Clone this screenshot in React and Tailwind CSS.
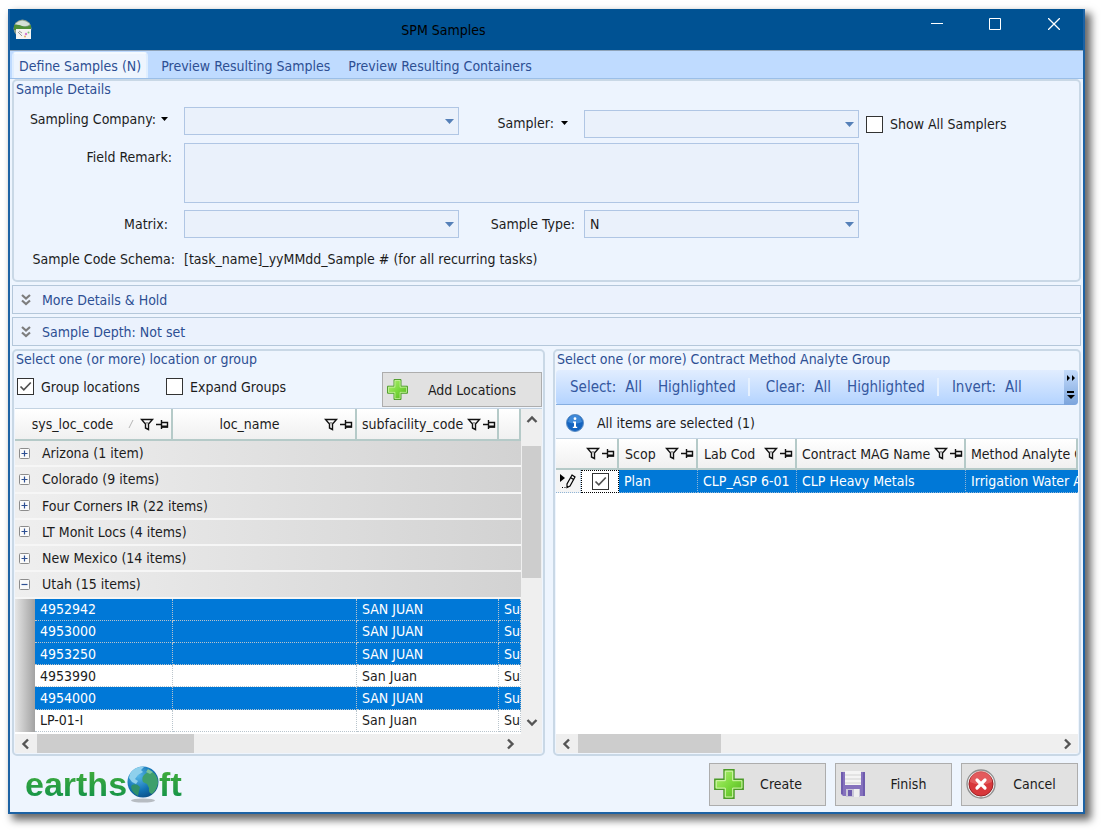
import { useState } from "react";

const groups = [
    { name: "Arizona (1 item)" },
    { name: "Colorado (9 items)" },
    { name: "Four Corners IR (22 items)" },
    { name: "LT Monit Locs (4 items)" },
    { name: "New Mexico (14 items)" },
    { name: "Utah (15 items)", open: true },
];

const locations = [
    { code: "4952942", facility: "SAN JUAN", selected: true },
    { code: "4953000", facility: "SAN JUAN", selected: true },
    { code: "4953250", facility: "SAN JUAN", selected: true },
    { code: "4953990", facility: "San Juan", selected: false },
    { code: "4954000", facility: "SAN JUAN", selected: true },
    { code: "LP-01-I", facility: "San Juan", selected: false },
];

function Caret({ className }) {
    return (
        <svg className={className} width="9" height="5" viewBox="0 0 9 5" fill="currentColor" aria-hidden="true">
            <path d="M0 0h9L4.5 5z" />
        </svg>
    );
}

function Combo({ id, className = "", options = [""] }) {
    return (
        <div className={"grid h-7 items-center " + className}>
            <select id={id} className="col-start-1 row-start-1 h-full w-full appearance-none border border-[#b0c6e4] bg-[#eaf1fb] px-[5px] outline-none">
                {options.map((o) => <option key={o}>{o}</option>)}
            </select>
            <Caret className="pointer-events-none col-start-1 row-start-1 mr-[5px] justify-self-end text-[#5580b8]" />
        </div>
    );
}

function Check({ label, defaultChecked, className = "", hideLabel }) {
    return (
        <label className={"flex items-center gap-[7px] " + className}>
            <span className="grid">
                <input type="checkbox" defaultChecked={defaultChecked} aria-label={label} className="peer col-start-1 row-start-1 size-[17px] appearance-none border border-[#333] bg-white" />
                <svg className="pointer-events-none invisible col-start-1 row-start-1 peer-checked:visible" width="17" height="17" viewBox="0 0 17 17" fill="none" stroke="#505050" strokeWidth="1.7" aria-hidden="true">
                    <path d="M3.5 8.5l3.3 3.3 7-7.3" />
                </svg>
            </span>
            {!hideLabel && <span>{label}</span>}
        </label>
    );
}

function FilterPin() {
    return (
        <svg width="30" height="13" viewBox="0 0 30 13" fill="none" stroke="#111" aria-hidden="true" className="shrink-0">
            <path d="M1.5 1.5h11L8.5 6v5.5l-3-1.5V6z" strokeWidth="1.4" fill="#fff" />
            <path d="M5 4h4L7 6.5z" fill="#999" stroke="none" />
            <path d="M16 6.5h5M21.5 2v9M22 4.5h5.5v4.5H22" strokeWidth="1.4" />
            <path d="M22 8.5h6" strokeWidth="2" />
        </svg>
    );
}

function Plus({ size }) {
    return (
        <svg width={size} height={size} viewBox="0 0 30 30" aria-hidden="true" className="shrink-0">
            <defs>
                <linearGradient id="plusFill" x1="0" y1="0" x2="1" y2="1">
                    <stop offset="0" stopColor="#b8f07a" />
                    <stop offset=".5" stopColor="#7ddb3e" />
                    <stop offset="1" stopColor="#4fae1c" />
                </linearGradient>
            </defs>
            <path d="M10 .8h10v9.5h9.2v10H20v9H10v-9H.8v-10H10z" fill="url(#plusFill)" stroke="#4c9a2a" strokeWidth="1.4" />
            <path d="M11.3 2.2h7.4v9.5h9.2v7.4h-9.2V28h-7.4v-8.9H2.2v-7.4h9.1z" fill="none" stroke="#d6f7b0" strokeWidth="1" />
        </svg>
    );
}

function Floppy() {
    return (
        <svg width="26" height="26" viewBox="0 0 26 26" aria-hidden="true">
            <path d="M1 1h24v24H3l-2-2z" fill="#8571bd" />
            <path d="M1 1h2v22H1zM23 1h2v24h-2z" fill="#6f5cae" />
            <path d="M5 0h16v14H5z" fill="#f4f4f4" />
            <path d="M5 4h16M5 8h16M5 12h16" stroke="#d2d2d2" />
            <path d="M6 18h14v8H6z" fill="#c9c6d8" />
            <path d="M8 19h4v6H8z" fill="#6f5cae" />
            <path d="M14 18h5v8h-5z" fill="#eee" />
        </svg>
    );
}

function CancelIcon() {
    return (
        <svg width="30" height="30" viewBox="0 0 30 30" aria-hidden="true">
            <circle cx="15" cy="15" r="14" fill="#e9e9e9" stroke="#8d8d8d" strokeWidth="1.3" />
            <circle cx="15" cy="15" r="12" fill="#d8383c" stroke="#9c2226" />
            <path d="M4 13a11 11 0 0 1 22 0q-11 5-22 0z" fill="#e8696b" opacity=".7" />
            <path d="M11 11l8 8M19 11l-8 8" stroke="#fff" strokeWidth="3.2" strokeLinecap="round" />
        </svg>
    );
}

function InfoIcon() {
    return (
        <svg width="18" height="18" viewBox="0 0 18 18" aria-hidden="true">
            <circle cx="9" cy="9" r="8.5" fill="#1464c0" stroke="#5f8fc4" />
            <path d="M2 8a7 7 0 0 1 14 0q-7 3-14 0z" fill="#5aa2ea" opacity=".6" />
            <circle cx="9" cy="4.7" r="1.4" fill="#fff" />
            <path d="M7 7.5h3v5.3h1.2V14H6.8v-1.2H8V8.7H7z" fill="#fff" />
        </svg>
    );
}

function AppIcon() {
    return (
        <svg width="20" height="21" viewBox="0 0 20 21" aria-hidden="true">
            <circle cx="9.5" cy="9.5" r="9" fill="#8c9e8a" />
            <path d="M2 5Q9-2 17 5q-3 3-8 2T2 5z" fill="#d5e0d6" />
            <path d="M1 6q4-1 8 1t9-1v5H1z" fill="#4e8f36" />
            <path d="M3 10h15v10H3z" fill="#f4f4f2" />
            <path d="M5 13l4 4M6 12l3 2" stroke="#999" />
            <circle cx="13" cy="15" r="1.2" fill="#d77bd0" />
            <circle cx="15.5" cy="13.5" r="1" fill="#7cc47c" />
            <circle cx="12" cy="17.5" r="1" fill="#e2b06a" />
        </svg>
    );
}

function DoubleChevron() {
    return (
        <svg width="10" height="12" viewBox="0 0 10 12" fill="none" stroke="#7d7d7d" strokeWidth="2.2" aria-hidden="true">
            <path d="M1 1l4 3.5L9 1M1 6.5L5 10l4-3.5" />
        </svg>
    );
}

function Arrow({ d }) {
    return (
        <svg width="12" height="12" viewBox="0 0 12 12" fill="none" stroke="#555" strokeWidth="2.4" aria-hidden="true">
            <path d={d} />
        </svg>
    );
}

const LEFT = "M8 1.5L3.5 6 8 10.5";
const RIGHT = "M4 1.5L8.5 6 4 10.5";
const UP = "M1.5 8L6 3.5 10.5 8";
const DOWN = "M1.5 4L6 8.5 10.5 4";

function HScroll({ thumb, corner }) {
    return (
        <div className={"flex h-[19px] shrink-0 items-center bg-[#efefef] " + (corner ? "pr-[21px]" : "")}>
            <button type="button" aria-label="Scroll left" className="flex w-[22px] justify-center"><Arrow d={LEFT} /></button>
            <div className="flex h-full flex-1"><div className={"h-full bg-[#cdcdcd] " + thumb}></div></div>
            <button type="button" aria-label="Scroll right" className="flex w-[22px] justify-center"><Arrow d={RIGHT} /></button>
        </div>
    );
}

const th = "border-r-2 border-b-2 border-r-[#b5cac8] border-b-[#b5cac8] bg-linear-to-b from-white to-[#f0f0f0] p-0 font-normal";

function Head({ label, span, center, sort, tight, first }) {
    return (
        <th colSpan={span} className={th}>
            <div className={"flex items-center overflow-hidden whitespace-nowrap " + (tight ? "gap-0 pl-[5px]" : "gap-1 pl-[6px] pr-px")}>
                <span className={"min-w-0 flex-1 overflow-hidden " + (center ? "text-center" : "text-left")}>{label}</span>
                {sort && <svg width="8" height="10" viewBox="0 0 8 10" fill="none" stroke="#b5b5b5" aria-hidden="true"><path d="M1 9l4-8" /></svg>}
                {!first && <FilterPin />}
            </div>
        </th>
    );
}

function Earth() {
    return (
        <svg width="32" height="38" viewBox="0 0 32 38" aria-hidden="true">
            <defs>
                <radialGradient id="sea" cx=".35" cy=".3" r=".8">
                    <stop offset="0" stopColor="#58b8e8" />
                    <stop offset=".6" stopColor="#1272b4" />
                    <stop offset="1" stopColor="#0a4a80" />
                </radialGradient>
            </defs>
            <ellipse cx="16" cy="35.5" rx="12" ry="2" fill="#b7bcc2" />
            <circle cx="16" cy="17" r="15.5" fill="url(#sea)" />
            <path d="M5 6q6-5 12-4l-3 3 2 2-5 3-3 4 3 2-2 3-4-2-3-4q0-4 3-7z" fill="#8fd0ec" />
            <path d="M18 9q5-4 9-1 4 4 4 10-1 7-6 11-4-1-3-6l-2-4-4-2q-2-5 2-8z" fill="#3f9f6c" />
            <path d="M5 20q5-2 8 2l-1 4-1 5q-6-3-7-9z" fill="#2f8f6a" />
            <path d="M21 4l5 3-3 2-4-2z" fill="#7cc49a" />
        </svg>
    );
}

const toolBtn = "px-1 hover:underline";
const footBtn = "flex h-[43px] w-[117px] items-center border border-[#adadad] bg-[#e1e1e1] pl-1";
const panel = "rounded-[5px] border-2 border-[#c9d8e6]";

export default function App() {
    const [tab, setTab] = useState(0);
    const tabs = ["Define Samples (N)", "Preview Resulting Samples", "Preview Resulting Containers"];

    return (
        <div className="flex min-h-screen flex-col bg-white pt-[9px] pr-4 pb-4 pl-2 font-['DejaVu_Sans_Condensed','Noto_Sans',sans-serif] text-[14px] leading-4 text-[#1c1c1c]">
            <div className="flex flex-1 flex-col border-x-2 border-b-2 border-[#1c62a4] bg-[#eef5fe] shadow-[5px_5px_8px_1px_#00000099]">
                <header className="flex h-[41px] items-stretch bg-[#005293]">
                    <div className="flex items-center pl-[3px]"><AppIcon /></div>
                    <h1 className="flex-1 self-center pr-[54px] text-center text-black">SPM Samples</h1>
                    <div className="flex h-[30px]">
                        <button type="button" aria-label="Minimize" className="flex w-[58px] items-center justify-center text-white">
                            <svg width="12" height="12" stroke="currentColor"><path d="M0 5.5h12" /></svg>
                        </button>
                        <button type="button" aria-label="Maximize" className="flex w-[58px] items-center justify-center text-white">
                            <svg width="12" height="12" stroke="currentColor" fill="none"><path d="M.5.5h11v11H.5z" /></svg>
                        </button>
                        <button type="button" aria-label="Close" className="flex w-[59px] items-center justify-center text-white">
                            <svg width="12" height="12" stroke="currentColor" strokeWidth="1.3"><path d="M0 0l12 12M12 0L0 12" /></svg>
                        </button>
                    </div>
                </header>

                <nav className="flex h-[29px] items-end border-t border-b border-t-[#8fa3b8] border-b-[#9bbfe8] bg-[#bfdbff] pl-[2px] text-[#2d4f93]">
                    {tabs.map((t, i) => (
                        <button key={t} type="button" onClick={() => setTab(i)} className={i === tab ? "mr-1 h-[26px] rounded-t border-x-2 border-t-2 border-x-[#dfeeff] border-t-[#f4faff] bg-[#eef5fe] px-[5px]" : "h-[26px] px-[9px] pt-[2px]"}>
                            {t}
                        </button>
                    ))}
                </nav>

                <main className="flex flex-1 flex-col gap-[3px] px-[2px]">
                    <section className={"flex h-[203px] flex-col bg-[#edf4fe] " + panel}>
                        <h2 className="pl-[2px] text-[#2d4f93]">Sample Details</h2>
                        <div className="mt-[10px] grid grid-cols-[170px_275px_125px_275px_auto] items-center gap-y-[5px]">
                            <div className="flex items-center justify-end gap-[5px] self-start pt-1 pr-4">
                                <label htmlFor="company">Sampling Company:</label>
                                <button type="button" aria-label="Company options"><Caret className="h-1 w-[7px] text-black" /></button>
                            </div>
                            <Combo id="company" className="self-start" />
                            <div className="flex items-center justify-end gap-[7px] pr-4">
                                <label htmlFor="sampler">Sampler:</label>
                                <button type="button" aria-label="Sampler options"><Caret className="h-1 w-[7px] text-black" /></button>
                            </div>
                            <Combo id="sampler" className="mt-[3px]" />
                            <Check label="Show All Samplers" className="pt-[3px] pl-[7px]" />

                            <label htmlFor="remark" className="self-start pt-[6px] pr-3 text-right">Field Remark:</label>
                            <textarea id="remark" className="col-span-3 block h-[60px] w-full resize-none border border-[#b0c6e4] bg-[#eaf1fb] outline-none"></textarea>
                            <span></span>

                            <label htmlFor="matrix" className="pt-[2px] pr-4 text-right">Matrix:</label>
                            <Combo id="matrix" className="mt-[2px]" />
                            <label htmlFor="type" className="pt-[2px] pr-[9px] text-right">Sample Type:</label>
                            <Combo id="type" className="mt-[2px]" options={["N"]} />
                            <span></span>

                            <span className="pt-2 pr-[9px] text-right">Sample Code Schema:</span>
                            <span className="col-span-4 pt-2">[task_name]_yyMMdd_Sample # (for all recurring tasks)</span>
                        </div>
                    </section>

                    {["More Details & Hold", "Sample Depth: Not set"].map((t) => (
                        <button key={t} type="button" className="flex h-[29px] items-center gap-[11px] border border-[#b4c7da] bg-[#ebf2fd] pl-2 text-[#2d4f93]">
                            <DoubleChevron />
                            {t}
                        </button>
                    ))}

                    <div className="grid flex-1 grid-cols-[533fr_528fr] gap-2">
                        <section className={"flex min-w-0 flex-col px-px pb-px " + panel}>
                            <h2 className="pl-px text-[#2d4f93]">Select one (or more) location or group</h2>
                            <div className="flex h-[41px] items-center pt-1 pl-[2px]">
                                <Check label="Group locations" defaultChecked className="w-[149px] pb-[6px]" />
                                <Check label="Expand Groups" className="pb-[6px]" />
                                <button type="button" className="ml-auto flex h-[35px] w-[160px] items-center border border-[#adadad] bg-[#e1e1e1] pl-1">
                                    <Plus size={21} />
                                    <span className="flex-1 pr-[5px] text-center">Add Locations</span>
                                </button>
                            </div>
                            <div className="flex flex-1 flex-col border-t border-[#c3d3e2]">
                                <div className="flex flex-1">
                                    <div className="min-w-0 flex-1 bg-white">
                                        <table className="h-[323px] w-full table-fixed border-separate border-spacing-0">
                                            <colgroup>
                                                <col className="w-[20px]" />
                                                <col className="w-[138px]" />
                                                <col className="w-[184px]" />
                                                <col className="w-[142px]" />
                                                <col />
                                            </colgroup>
                                            <thead>
                                                <tr className="h-[32px]">
                                                    <Head label="sys_loc_code" span={2} center sort />
                                                    <Head label="loc_name" center />
                                                    <Head label="subfacility_code" tight />
                                                    <Head label="" first />
                                                </tr>
                                            </thead>
                                            <tbody>
                                                {groups.map((g) => (
                                                    <tr key={g.name} className="h-[26px]">
                                                        <td colSpan={5} className="border-b-2 border-[#f6f6f6] bg-linear-to-r from-[#efefef] to-[#d2d2d2] p-0">
                                                            <div className="flex items-center gap-3 pl-1">
                                                                <button type="button" aria-label={"Toggle " + g.name}>
                                                                    <svg className="block" width="11" height="11" viewBox="0 0 11 11" fill="none">
                                                                        <rect x=".5" y=".5" width="10" height="10" rx="1" fill="#fafafa" stroke="#8c8c8c" />
                                                                        <path d={g.open ? "M2.5 5.5h6" : "M2.5 5.5h6M5.5 2.5v6"} stroke="#2d4f93" strokeWidth="1.2" />
                                                                    </svg>
                                                                </button>
                                                                {g.name}
                                                            </div>
                                                        </td>
                                                    </tr>
                                                ))}
                                                {locations.map((l) => {
                                                    const cell = "overflow-hidden whitespace-nowrap border-r border-b border-dotted border-[#b8c4cc] p-0 pl-[5px] " + (l.selected ? "bg-[#0078d7] text-white" : "bg-white");
                                                    return (
                                                        <tr key={l.code} className="h-[22px]">
                                                            <td className="bg-linear-to-r from-[#e6e6e6] to-[#a2a2a2] p-0"></td>
                                                            <td className={cell}>{l.code}</td>
                                                            <td className={cell}></td>
                                                            <td className={cell}>{l.facility}</td>
                                                            <td className={cell}>Su</td>
                                                        </tr>
                                                    );
                                                })}
                                            </tbody>
                                        </table>
                                    </div>
                                    <div className="flex w-[21px] flex-col items-center bg-[#efefef] px-px">
                                        <button type="button" aria-label="Scroll up" className="flex h-[37px] items-start pt-[5px]"><Arrow d={UP} /></button>
                                        <div className="h-[132px] w-full bg-[#cdcdcd]"></div>
                                        <button type="button" aria-label="Scroll down" className="mt-auto flex h-[25px] items-center"><Arrow d={DOWN} /></button>
                                    </div>
                                </div>
                                <HScroll thumb="w-[157px]" corner />
                            </div>
                        </section>

                        <section className={"flex min-w-0 flex-col px-px pb-px " + panel}>
                            <h2 className="pl-px text-[#2d4f93]">Select one (or more) Contract Method Analyte Group</h2>
                            <div className="mt-[3px] flex h-[35px] items-stretch rounded-sm bg-linear-to-b from-[#e1edff] to-[#b3d3ff] text-[15px] text-[#3558a0]">
                                <div className="flex min-w-0 flex-1 items-center overflow-hidden border-b border-[#86aee0] whitespace-nowrap">
                                    <span className="pl-[14px]">Select:</span>
                                    <button type="button" className={toolBtn + " ml-[5px]"}>All</button>
                                    <button type="button" className={toolBtn + " ml-2"}>Highlighted</button>
                                    <span className="mx-2 h-[18px] border-l-2 border-[#e6f1ff]"></span>
                                    <span className="pl-2">Clear:</span>
                                    <button type="button" className={toolBtn + " ml-[5px]"}>All</button>
                                    <button type="button" className={toolBtn + " ml-2"}>Highlighted</button>
                                    <span className="mx-2 h-[18px] border-l-2 border-[#e6f1ff]"></span>
                                    <span className="pl-[5px]">Invert:</span>
                                    <button type="button" className={toolBtn + " ml-[5px]"}>All</button>
                                </div>
                                <button type="button" aria-label="More commands" className="flex w-[14px] flex-col items-center justify-between rounded-r-sm bg-linear-to-b from-[#c5dcfb] to-[#7ba4dc] py-[5px] text-black">
                                    <svg width="9" height="6" fill="currentColor"><path d="M0 0l3 3-3 3zM5 0l3 3-3 3z" /></svg>
                                    <svg width="8" height="9" fill="currentColor"><path d="M0 0h7v2H0zM0 4h8L4 8z" /></svg>
                                </button>
                            </div>
                            <div className="flex h-[33px] items-center gap-[13px] pt-[3px] pl-[10px]">
                                <InfoIcon />
                                <span>All items are selected (1)</span>
                            </div>
                            <div className="flex flex-1 flex-col border-t border-[#c3d3e2]">
                                <div className="flex-1 overflow-hidden bg-white">
                                    <table className="w-full table-fixed border-separate border-spacing-0">
                                        <colgroup>
                                            <col className="w-[25px]" />
                                            <col className="w-[38px]" />
                                            <col className="w-[79px]" />
                                            <col className="w-[99px]" />
                                            <col className="w-[169px]" />
                                            <col />
                                        </colgroup>
                                        <thead>
                                            <tr className="h-[31px]">
                                                <Head label="" span={2} />
                                                <Head label="Scop" />
                                                <Head label="Lab Cod" />
                                                <Head label="Contract MAG Name" tight />
                                                <Head label="Method Analyte Group" tight first />
                                            </tr>
                                        </thead>
                                        <tbody>
                                            <tr className="h-[23px] text-white *:overflow-hidden *:border-b *:border-dotted *:border-[#8fb4d6] *:p-0 *:whitespace-nowrap">
                                                <td className="border-r bg-[#f4f4f4]">
                                                    <svg className="ml-1" width="16" height="16" viewBox="0 0 16 16" fill="none" stroke="#000" aria-hidden="true">
                                                        <path d="M0 1v8l5-4z" fill="#000" stroke="none" />
                                                        <path d="M12 2l3 2-5 9-3 1.500V11zM10.5 4.5l3 2M2 14.5h1M4.5 14.5h1" strokeWidth="1.2" />
                                                    </svg>
                                                </td>
                                                <td className="bg-white outline-1 -outline-offset-1 outline-black outline-dotted">
                                                    <Check label="Select row" hideLabel defaultChecked className="justify-center" />
                                                </td>
                                                <td className="border-r bg-[#0078d7]"><span className="pl-[5px]">Plan</span></td>
                                                <td className="border-r bg-[#0078d7]"><span className="pl-[5px]">CLP_ASP 6-01</span></td>
                                                <td className="border-r bg-[#0078d7]"><span className="pl-[5px]">CLP Heavy Metals</span></td>
                                                <td className="bg-[#0078d7]"><span className="pl-[5px]">Irrigation Water Analysis</span></td>
                                            </tr>
                                        </tbody>
                                    </table>
                                </div>
                                <HScroll thumb="w-[143px]" />
                            </div>
                        </section>
                    </div>
                </main>

                <footer className="flex h-14 items-center justify-between pr-[5px] pl-[15px]">
                    <div className="flex items-center bg-linear-to-b from-[#45b035] to-[#00904a] bg-clip-text font-['Liberation_Sans',sans-serif] text-[34px] leading-9 font-bold text-transparent">
                        earths<Earth />ft
                    </div>
                    <div className="flex gap-[9px]">
                        <button type="button" className={footBtn}><Plus size={30} /><span className="flex-1 pr-[7px] text-center">Create</span></button>
                        <button type="button" className={footBtn}><Floppy /><span className="flex-1 text-center">Finish</span></button>
                        <button type="button" className={footBtn}><CancelIcon /><span className="flex-1 pr-1 text-center">Cancel</span></button>
                    </div>
                </footer>
            </div>
        </div>
    );
}
